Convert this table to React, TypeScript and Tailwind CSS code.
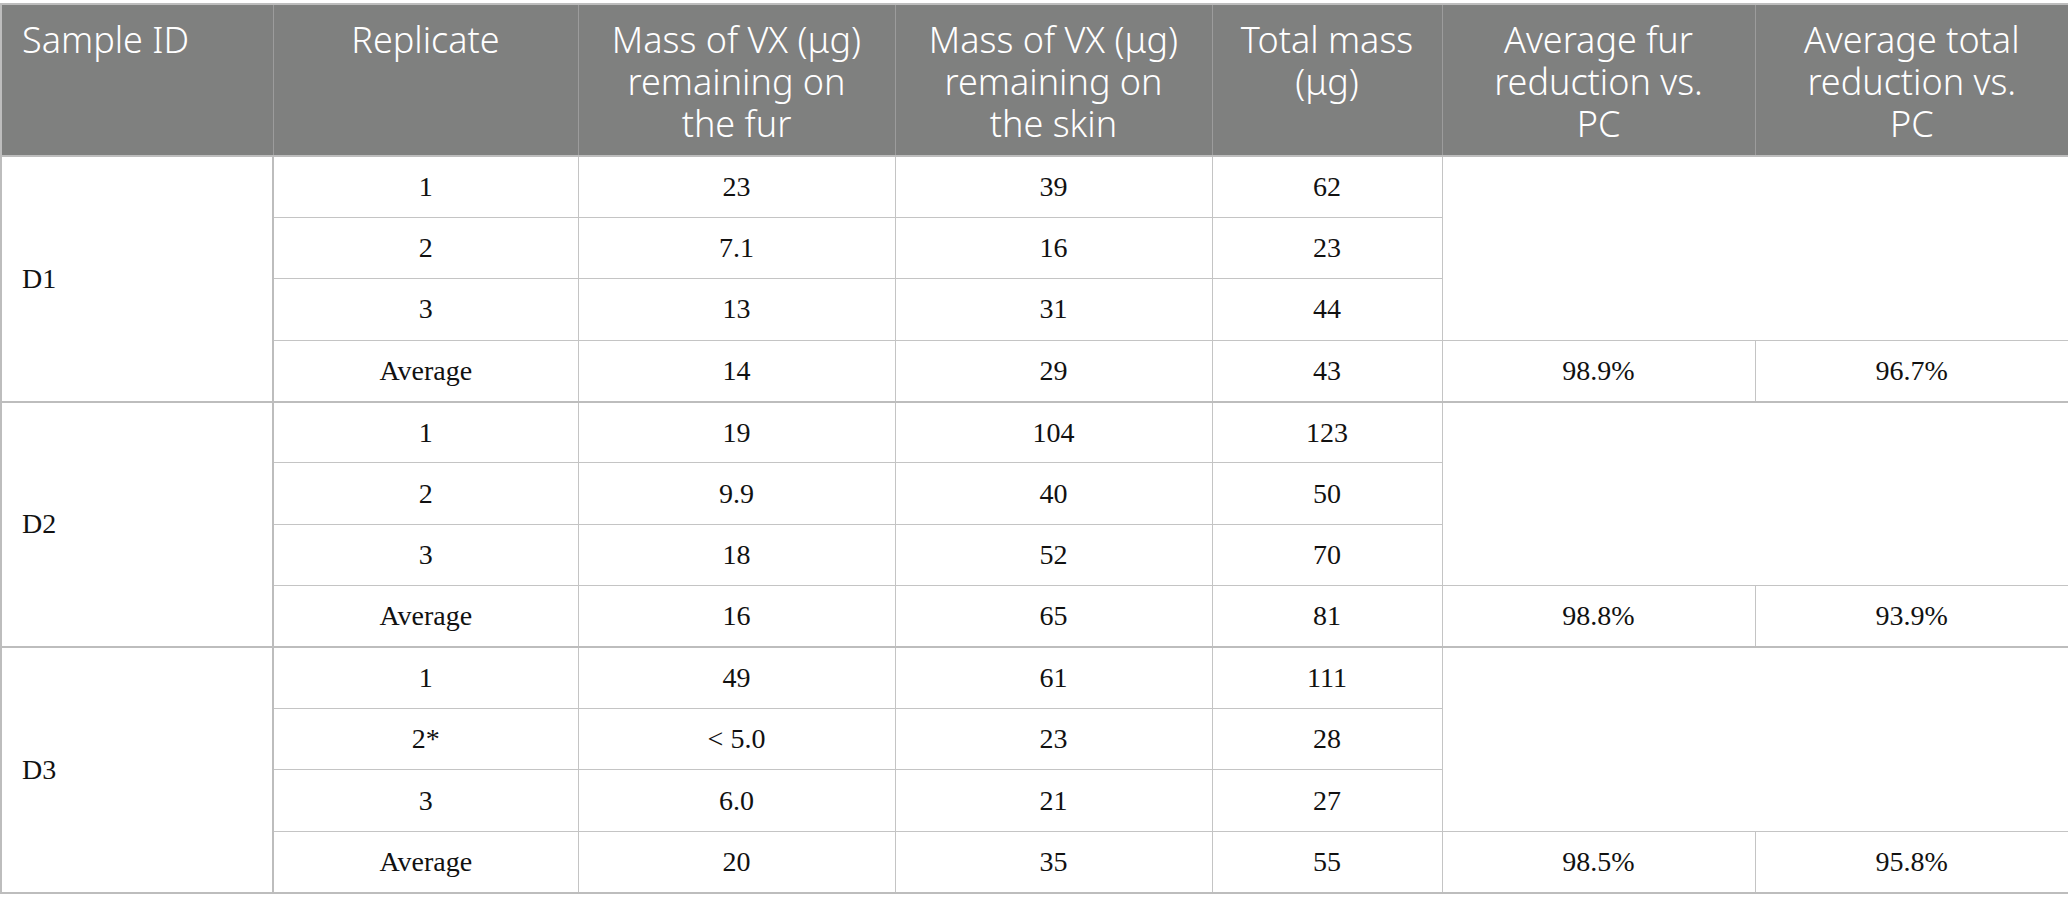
const groups = [
  {
    id: "D1",
    rows: [
      ["1", "23", "39", "62"],
      ["2", "7.1", "16", "23"],
      ["3", "13", "31", "44"],
      ["Average", "14", "29", "43"],
    ],
    fur: "98.9%",
    total: "96.7%",
  },
  {
    id: "D2",
    rows: [
      ["1", "19", "104", "123"],
      ["2", "9.9", "40", "50"],
      ["3", "18", "52", "70"],
      ["Average", "16", "65", "81"],
    ],
    fur: "98.8%",
    total: "93.9%",
  },
  {
    id: "D3",
    rows: [
      ["1", "49", "61", "111"],
      ["2*", "< 5.0", "23", "28"],
      ["3", "6.0", "21", "27"],
      ["Average", "20", "35", "55"],
    ],
    fur: "98.5%",
    total: "95.8%",
  },
]

// header lines broken the way the source table wraps them
const headers = [
  ["Replicate"],
  ["Mass of VX (μg)", "remaining on", "the fur"],
  ["Mass of VX (μg)", "remaining on", "the skin"],
  ["Total mass", "(μg)"],
  ["Average fur", "reduction vs.", "PC"],
  ["Average total", "reduction vs.", "PC"],
]

const cell = "h-[61.4px] border border-[#c4c4c4] text-center align-middle p-0"

export default function App() {
  return (
    <div className="min-h-screen bg-white pt-[3px]">
      <table className="w-[2068px] table-fixed border-collapse border-2 border-[#bdbdbd] font-['Liberation_Serif',serif] text-[28px] text-[#111]">
        <colgroup>
          <col className="w-[272px]" />
          <col className="w-[305px]" />
          <col className="w-[317px]" />
          <col className="w-[317px]" />
          <col className="w-[230px]" />
          <col className="w-[313px]" />
          <col className="w-[314px]" />
        </colgroup>
        <thead>
          <tr className="bg-[#7f807f] font-['Noto_Sans',sans-serif] text-[36px] leading-[42px] text-white">
            <th className="h-[152px] border border-[#9c9c9c] border-b-2 border-b-[#bdbdbd] pl-5 pr-3 pt-[14px] text-left align-top font-light">
              Sample ID
            </th>
            {headers.map((h) => (
              <th
                key={h.join(" ")}
                className="border border-[#9c9c9c] border-b-2 border-b-[#bdbdbd] px-2 pt-[14px] text-center align-top font-light whitespace-nowrap"
              >
                {h.map((line) => (
                  <div key={line}>{line}</div>
                ))}
              </th>
            ))}
          </tr>
        </thead>
        {groups.map((g) => (
          <tbody key={g.id} className="border-b-2 border-[#bdbdbd]">
            {g.rows.map((r, i) => (
              <tr key={i}>
                {i === 0 && (
                  <td rowSpan={4} className="border-2 border-[#bdbdbd] pl-5 text-left align-middle">
                    {g.id}
                  </td>
                )}
                {r.map((v, j) => (
                  <td key={j} className={cell}>
                    {v}
                  </td>
                ))}
                {i === 0 && <td rowSpan={3} colSpan={2} className="border border-[#c4c4c4]" />}
                {i === 3 && (
                  <>
                    <td className={cell}>{g.fur}</td>
                    <td className={cell}>{g.total}</td>
                  </>
                )}
              </tr>
            ))}
          </tbody>
        ))}
      </table>
    </div>
  )
}
